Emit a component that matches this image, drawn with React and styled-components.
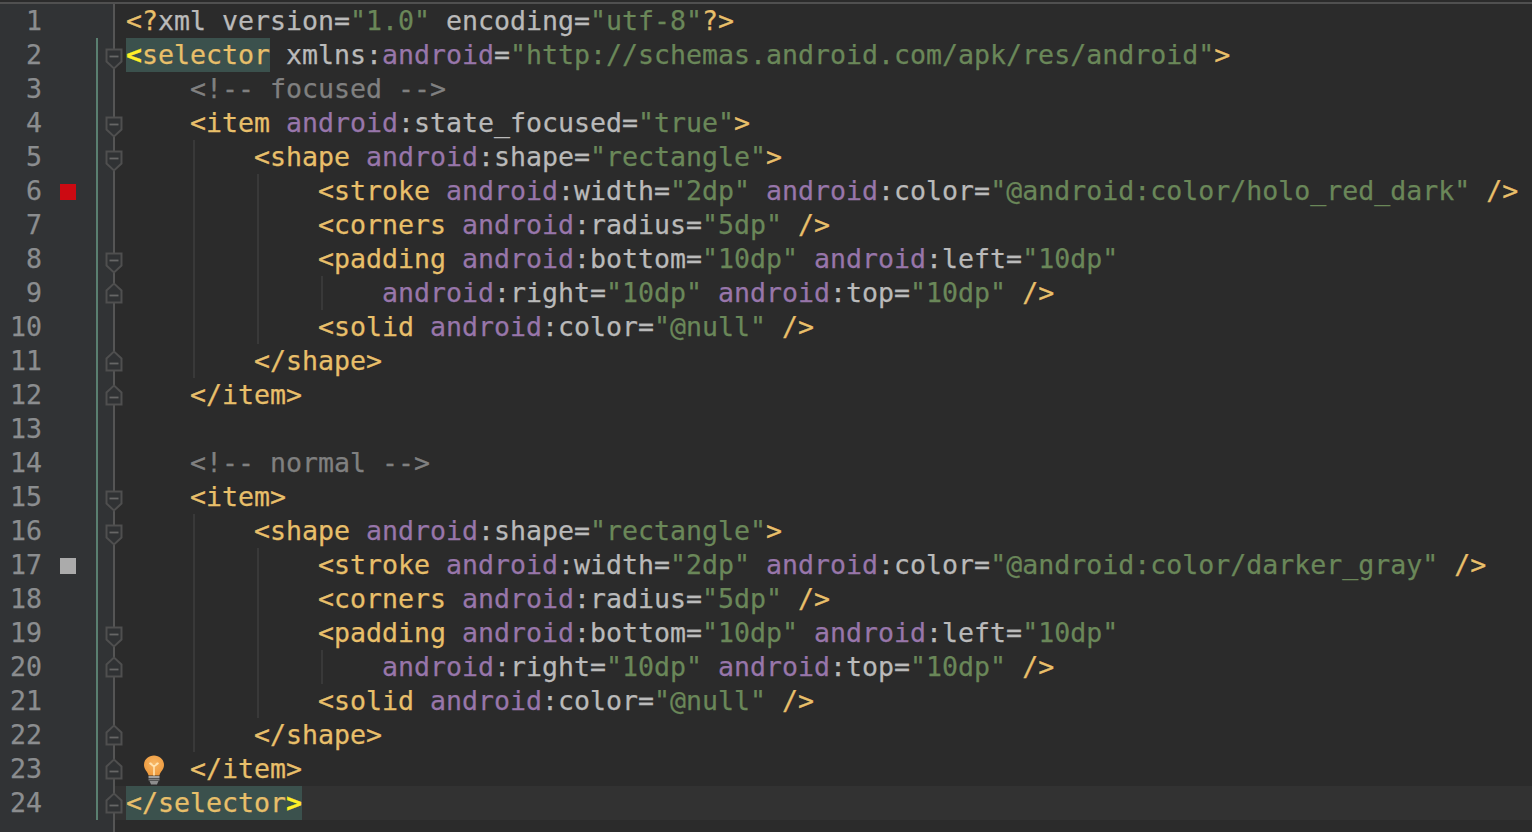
import React from 'react';
import styled, { createGlobalStyle } from 'styled-components';

const GlobalStyle = createGlobalStyle`
  html, body {
    margin: 0;
    height: 100%;
    background: #2b2b2b;
  }
  #root {
    height: 100%;
  }
`;

const Editor = styled.div`
  display: flex;
  flex-direction: column;
  height: 100vh;
  overflow: hidden;
  padding-top: 2px;
  box-sizing: border-box;
  background: #2b2b2b;
  font-family: "DejaVu Sans Mono", monospace;
  font-size: 26.58px;
  line-height: 34px;
  color: #bababa;
  -webkit-text-stroke: 0.25px;
`;

const TopBorder = styled.div`
  flex: none;
  height: 2px;
  background: #505050;
`;

const Row = styled.div`
  position: relative;
  display: flex;
  flex: none;
  height: 34px;
  background: ${(p) => (p.$current ? '#323232' : 'transparent')};
`;

const Filler = styled.div`
  display: flex;
  flex: 1;
`;

const Gutter = styled.div`
  position: relative;
  display: flex;
  flex: none;
  width: 115px;
  height: 100%;
  margin-right: 11px;
  background:
    linear-gradient(#555555, #555555) no-repeat 113px 0 / 2px 100%,
    ${(p) => (p.$changed ? 'linear-gradient(#5a7f70, #5a7f70) no-repeat 96px 0 / 2px 100%,' : '')}
    linear-gradient(#313335, #313335) no-repeat 0 0 / 114px 100%;
`;

const LineNumber = styled.span`
  flex: none;
  width: 42px;
  text-align: right;
  color: #8b8d8f;
`;

const Swatch = styled.span`
  flex: none;
  width: 16px;
  height: 16px;
  margin: 10px 0 0 18px;
  background: ${(p) => p.$color};
`;

const FoldIcon = styled.svg`
  position: absolute;
  left: 105px;
  top: ${(p) => (p.$kind === 'open' ? 10 : 6)}px;
  width: 18px;
  height: 22px;
`;

const Code = styled.div`
  display: flex;
  white-space: pre;
`;

const Indent = styled.span`
  flex: none;
  width: 64px;
  height: 34px;
  background: ${(p) =>
    p.$guide ? 'linear-gradient(#393939, #393939) no-repeat 3px 0 / 2px 100%' : 'none'};
`;

const Tag = styled.span`
  color: #e8bf6a;
`;

const Attr = styled.span`
  color: #9876aa;
`;

const Str = styled.span`
  color: #6a8759;
`;

const Comment = styled.span`
  color: #808080;
`;

const Match = styled.span`
  display: inline-block;
  height: 34px;
  background: #3b514d;
  color: #e8bf6a;
`;

const Brace = styled.span`
  color: #ffef28;
  font-weight: bold;
`;

const BulbIcon = styled.svg`
  position: absolute;
  left: 143px;
  top: 3px;
  width: 22px;
  height: 30px;
`;

const LINES = [
  { text: '<?xml version="1.0" encoding="utf-8"?>' },
  { match: 'open', text: ' xmlns:android="http://schemas.android.com/apk/res/android">', changed: true, fold: 'open' },
  { comment: '<!-- focused -->', indent: 1 },
  { text: '<item android:state_focused="true">', indent: 1, fold: 'open' },
  { text: '<shape android:shape="rectangle">', indent: 2, fold: 'open' },
  { text: '<stroke android:width="2dp" android:color="@android:color/holo_red_dark" />', indent: 3, swatch: '#cc0a12' },
  { text: '<corners android:radius="5dp" />', indent: 3 },
  { text: '<padding android:bottom="10dp" android:left="10dp"', indent: 3, fold: 'open' },
  { text: 'android:right="10dp" android:top="10dp" />', indent: 4, fold: 'close' },
  { text: '<solid android:color="@null" />', indent: 3 },
  { text: '</shape>', indent: 2, fold: 'close' },
  { text: '</item>', indent: 1, fold: 'close' },
  { text: '' },
  { comment: '<!-- normal -->', indent: 1 },
  { text: '<item>', indent: 1, fold: 'open' },
  { text: '<shape android:shape="rectangle">', indent: 2, fold: 'open' },
  { text: '<stroke android:width="2dp" android:color="@android:color/darker_gray" />', indent: 3, swatch: '#ababab' },
  { text: '<corners android:radius="5dp" />', indent: 3 },
  { text: '<padding android:bottom="10dp" android:left="10dp"', indent: 3, fold: 'open' },
  { text: 'android:right="10dp" android:top="10dp" />', indent: 4, fold: 'close' },
  { text: '<solid android:color="@null" />', indent: 3 },
  { text: '</shape>', indent: 2, fold: 'close' },
  { text: '</item>', indent: 1, fold: 'close', bulb: true },
  { match: 'close', text: '', fold: 'close', current: true },
];

const TOKEN = /("[^"]*")|(android(?=[:=]))|(<\?|\?>|<\/?\w+|\/>|>)/g;

// splits a line of xml into coloured spans
const highlight = (text) => {
  const parts = [];
  let last = 0;
  for (const m of text.matchAll(TOKEN)) {
    if (m.index > last) parts.push(text.slice(last, m.index));
    if (m[1]) parts.push(<Str key={m.index}>{m[1]}</Str>);
    if (m[2]) parts.push(<Attr key={m.index}>{m[2]}</Attr>);
    if (m[3]) parts.push(<Tag key={m.index}>{m[3]}</Tag>);
    last = m.index + m[0].length;
  }
  if (last < text.length) parts.push(text.slice(last));
  return parts;
};

const Fold = ({ kind }) => (
  <FoldIcon $kind={kind} viewBox="0 0 18 22">
    <path
      d={kind === 'open' ? 'M1.5 1.5H16.5V13.5L9 20.5L1.5 13.5Z' : 'M1.5 20.5H16.5V8.5L9 1.5L1.5 8.5Z'}
      fill="#303234"
      stroke="#4f4f4f"
      strokeWidth="2"
    />
    <path d={kind === 'open' ? 'M4.5 8.5H13.5' : 'M4.5 13.5H13.5'} stroke="#666666" strokeWidth="1.8" />
  </FoldIcon>
);

const Bulb = () => (
  <BulbIcon viewBox="0 0 22 30">
    <defs>
      <radialGradient id="glass" cx="50%" cy="40%" r="60%">
        <stop offset="0%" stopColor="#f7b562" />
        <stop offset="100%" stopColor="#ee9a3e" />
      </radialGradient>
    </defs>
    <path
      d="M11 0.5C5.2 0.5 1 4.6 1 10C1 14.5 4.6 16.5 5.6 20.5H16.4C17.4 16.5 21 14.5 21 10C21 4.6 16.8 0.5 11 0.5Z"
      fill="url(#glass)"
    />
    <path
      d="M6.5 8L11 11.5L15.5 8M11 11.5V20.5M7.5 7.5A1.5 1.5 0 0 0 9.5 9M14.5 7.5A1.5 1.5 0 0 1 12.5 9"
      fill="none"
      stroke="#ffe3b0"
      strokeWidth="1.6"
    />
    <path d="M5.5 21H16.5V23H5.5Z" fill="#a0a0a0" />
    <path d="M5.5 23.5H16.5V25.5H5.5Z" fill="#7d7d7d" />
    <path d="M6.5 26H15.5L14 29.5H8Z" fill="#8d8d8d" />
  </BulbIcon>
);

const App = () => (
  <Editor>
    <GlobalStyle />
    <TopBorder />
    {LINES.map((line, i) => (
      <Row key={i} $current={line.current}>
        <Gutter $changed={i > 0}>
          <LineNumber>{i + 1}</LineNumber>
          {line.swatch && <Swatch $color={line.swatch} />}
          {line.fold && <Fold kind={line.fold} />}
        </Gutter>
        {line.bulb && <Bulb />}
        <Code>
          {Array.from({ length: line.indent || 0 }, (_, n) => (
            <Indent key={n} $guide={n > 0} />
          ))}
          {line.match === 'open' && (
            <Match>
              <Brace>&lt;</Brace>selector
            </Match>
          )}
          {line.match === 'close' && (
            <Match>
              &lt;/selector<Brace>&gt;</Brace>
            </Match>
          )}
          {line.comment && <Comment>{line.comment}</Comment>}
          <span>{highlight(line.text || '')}</span>
        </Code>
      </Row>
    ))}
    <Filler>
      <Gutter />
    </Filler>
  </Editor>
);

export default App;
